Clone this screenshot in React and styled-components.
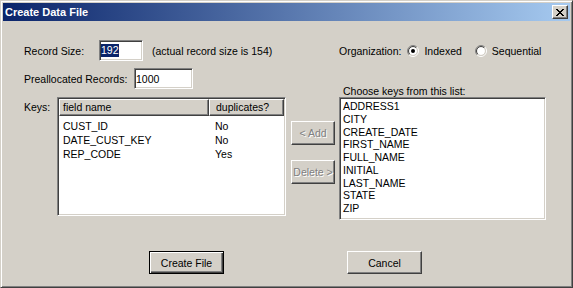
import styled, { createGlobalStyle } from "styled-components";

const GlobalStyle = createGlobalStyle`
  html, body {
    margin: 0;
    padding: 0;
    background: #d4d0c8;
  }
  body {
    font-family: "Liberation Sans", Arial, sans-serif;
    font-size: 10.5px;
    color: #000;
  }
`;

// classic 3d edges
const raised = `
  border: 1px solid;
  border-color: #fff #404040 #404040 #fff;
  box-shadow: inset -1px -1px #808080, inset 1px 1px #d4d0c8;
`;

const sunken = `
  border: 1px solid;
  border-color: #808080 #fff #fff #808080;
  box-shadow: inset 1px 1px #404040, inset -1px -1px #d4d0c8;
`;

const keys = [
    { name: "CUST_ID", dup: "No" },
    { name: "DATE_CUST_KEY", dup: "No" },
    { name: "REP_CODE", dup: "Yes" },
];

const choices = [
    "ADDRESS1",
    "CITY",
    "CREATE_DATE",
    "FIRST_NAME",
    "FULL_NAME",
    "INITIAL",
    "LAST_NAME",
    "STATE",
    "ZIP",
];

function Radio({ checked }) {
    const arc = (r) => {
        const d = r * 0.7071;
        return {
            tl: `M${6 - d} ${6 + d} A${r} ${r} 0 0 1 ${6 + d} ${6 - d}`,
            br: `M${6 + d} ${6 - d} A${r} ${r} 0 0 1 ${6 - d} ${6 + d}`,
        };
    };
    const outer = arc(5.5);
    const inner = arc(4.5);
    return (
        <RadioIcon width="12" height="12" viewBox="0 0 12 12">
            <circle cx="6" cy="6" r="4" fill="#fff" />
            <path d={outer.tl} stroke="#808080" fill="none" />
            <path d={outer.br} stroke="#fff" fill="none" />
            <path d={inner.tl} stroke="#404040" fill="none" />
            <path d={inner.br} stroke="#d4d0c8" fill="none" />
            {checked && <circle cx="6" cy="6" r="2" fill="#000" />}
        </RadioIcon>
    );
}

function CloseGlyph() {
    return (
        <svg width="8" height="7" viewBox="0 0 8 7" shapeRendering="crispEdges">
            <path
                fill="#000"
                d="M0 0h2v1H0z M6 0h2v1H6z M1 1h2v1H1z M5 1h2v1H5z M2 2h4v1H2z M3 3h2v1H3z M2 4h4v1H2z M1 5h2v1H1z M5 5h2v1H5z M0 6h2v1H0z M6 6h2v1H6z"
            />
        </svg>
    );
}

export default function App() {
    return (
        <>
            <GlobalStyle />
            <Window>
                <TitleBar>
                    <Title>Create Data File</Title>
                    <CloseButton>
                        <CloseGlyph />
                    </CloseButton>
                </TitleBar>
                <Body>
                    <Main>
                        <LeftCol>
                            <FieldRow>
                                <Label width={75}>Record Size:</Label>
                                <Field width={44}>
                                    <Selected>192</Selected>
                                </Field>
                                <Note>(actual record size is 154)</Note>
                            </FieldRow>
                            <FieldRow top={7}>
                                <Label width={110}>Preallocated Records:</Label>
                                <Field width={59}>1000</Field>
                            </FieldRow>
                            <KeysRow>
                                <KeysLabel>Keys:</KeysLabel>
                                <ListView>
                                    <Header>
                                        <HeaderCell width={150} pad={3}>
                                            field name
                                        </HeaderCell>
                                        <HeaderCell width={75} pad={6}>
                                            duplicates?
                                        </HeaderCell>
                                    </Header>
                                    <Rows>
                                        {keys.map((k) => (
                                            <Row key={k.name}>
                                                <Cell width={150} pad={4}>
                                                    {k.name}
                                                </Cell>
                                                <Cell width={75} pad={6}>
                                                    {k.dup}
                                                </Cell>
                                            </Row>
                                        ))}
                                    </Rows>
                                </ListView>
                                <ButtonCol>
                                    <SideButton disabled>&lt; Add</SideButton>
                                    <SideButton disabled>Delete &gt;</SideButton>
                                </ButtonCol>
                            </KeysRow>
                        </LeftCol>
                        <RightCol>
                            <OrgRow>
                                <span>Organization:</span>
                                <Option gap={6}>
                                    <Radio checked />
                                    <span>Indexed</span>
                                </Option>
                                <Option gap={13}>
                                    <Radio />
                                    <span>Sequential</span>
                                </Option>
                            </OrgRow>
                            <ChooseLabel>Choose keys from this list:</ChooseLabel>
                            <ListBox>
                                {choices.map((c) => (
                                    <Item key={c}>{c}</Item>
                                ))}
                            </ListBox>
                        </RightCol>
                    </Main>
                    <Footer>
                        <Button isDefault>Create File</Button>
                        <Button>Cancel</Button>
                    </Footer>
                </Body>
            </Window>
        </>
    );
}

const Window = styled.div`
    width: 573px;
    height: 288px;
    box-sizing: border-box;
    display: flex;
    flex-direction: column;
    padding: 2px;
    background: #d4d0c8;
    border: 1px solid;
    border-color: #d4d0c8 #404040 #404040 #d4d0c8;
    box-shadow: inset 1px 1px #fff, inset -1px -1px #808080;
`;

const TitleBar = styled.div`
    height: 18px;
    display: flex;
    align-items: center;
    justify-content: space-between;
    padding: 0 2px;
    background: linear-gradient(to right, #0a246a, #a6caf0);
`;

const Title = styled.span`
    color: #fff;
    font-weight: 700;
    font-size: 11px;
`;

const CloseButton = styled.div`
    width: 16px;
    height: 14px;
    box-sizing: border-box;
    display: flex;
    align-items: center;
    justify-content: center;
    padding-right: 1px;
    background: #d4d0c8;
    ${raised}
`;

const Body = styled.div`
    flex: 1;
    display: flex;
    flex-direction: column;
    padding: 19px 0 0 21px;
`;

const Main = styled.div`
    display: flex;
    align-items: flex-start;
`;

const LeftCol = styled.div`
    width: 315px;
    display: flex;
    flex-direction: column;
`;

const FieldRow = styled.div`
    display: flex;
    align-items: center;
    height: 21px;
    margin-top: ${({ top }) => top || 0}px;
`;

const Label = styled.span`
    width: ${({ width }) => width}px;
    flex-shrink: 0;
    white-space: nowrap;
`;

const Field = styled.div`
    width: ${({ width }) => width}px;
    height: 21px;
    box-sizing: border-box;
    display: flex;
    align-items: center;
    padding-left: 1px;
    background: #fff;
    ${sunken}
`;

const Selected = styled.span`
    background: #0a246a;
    color: #fff;
    line-height: 13px;
`;

const Note = styled.span`
    margin-left: 9px;
    white-space: nowrap;
`;

const KeysRow = styled.div`
    display: flex;
    align-items: flex-start;
    margin-top: 8px;
`;

const KeysLabel = styled.span`
    width: 33px;
    flex-shrink: 0;
    margin-top: 4px;
    line-height: 12px;
`;

const ListView = styled.div`
    width: 229px;
    height: 119px;
    box-sizing: border-box;
    padding: 1px;
    background: #fff;
    ${sunken}
`;

const Header = styled.div`
    display: flex;
    height: 17px;
`;

const HeaderCell = styled.div`
    width: ${({ width }) => width}px;
    box-sizing: border-box;
    padding-left: ${({ pad }) => pad}px;
    line-height: 15px;
    background: #d4d0c8;
    white-space: nowrap;
    ${raised}
`;

const Rows = styled.div`
    padding-top: 3px;
`;

const Row = styled.div`
    display: flex;
    height: 14px;
    line-height: 14px;
`;

const Cell = styled.div`
    width: ${({ width }) => width}px;
    box-sizing: border-box;
    padding-left: ${({ pad }) => pad}px;
    white-space: nowrap;
`;

const ButtonCol = styled.div`
    display: flex;
    flex-direction: column;
    gap: 15px;
    margin-left: 5px;
    padding-top: 24px;
`;

const SideButton = styled.button`
    width: 44px;
    height: 24px;
    box-sizing: border-box;
    padding: 0;
    font: inherit;
    white-space: nowrap;
    background: #d4d0c8;
    color: #808080;
    text-shadow: 1px 1px #fff;
    ${raised}
`;

const RightCol = styled.div`
    width: 207px;
    display: flex;
    flex-direction: column;
`;

const OrgRow = styled.div`
    display: flex;
    align-items: center;
    height: 21px;
    white-space: nowrap;
`;

const Option = styled.span`
    display: flex;
    align-items: center;
    gap: 5px;
    margin-left: ${({ gap }) => gap}px;
`;

const RadioIcon = styled.svg`
    display: block;
    flex-shrink: 0;
`;

const ChooseLabel = styled.div`
    margin-top: 24px;
    padding-left: 4px;
    line-height: 12px;
    white-space: nowrap;
`;

const ListBox = styled.div`
    width: 207px;
    height: 123px;
    box-sizing: border-box;
    padding: 2px 3px;
    background: #fff;
    ${sunken}
`;

const Item = styled.div`
    line-height: 12.75px;
`;

const Footer = styled.div`
    display: flex;
    gap: 123px;
    margin-top: 31px;
    padding-left: 125px;
`;

const Button = styled.button`
    width: 75px;
    height: 23px;
    box-sizing: border-box;
    padding: 0;
    font: inherit;
    color: #000;
    background: #d4d0c8;
    ${({ isDefault }) =>
        isDefault
            ? `
        border: 1px solid #000;
        box-shadow: inset 1px 1px #fff, inset -1px -1px #404040, inset -2px -2px #808080, inset 2px 2px #d4d0c8;
    `
            : raised}
`;
